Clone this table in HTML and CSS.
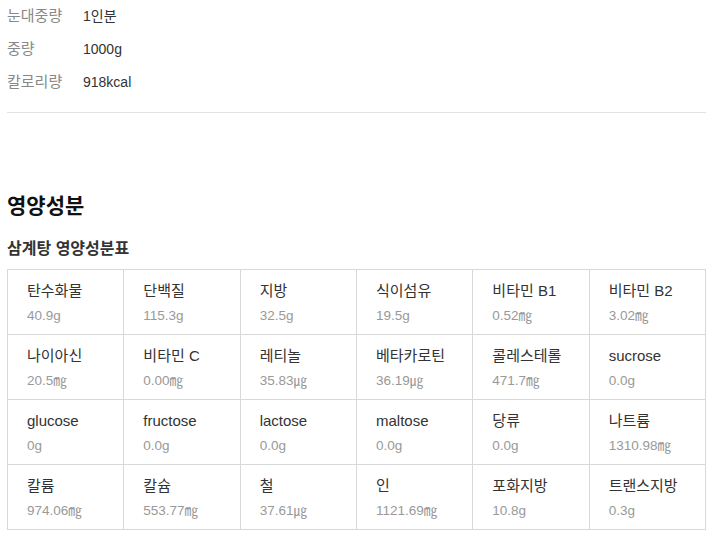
FILE: index.html
```html
<!DOCTYPE html>
<html lang="ko">
<head>
<meta charset="utf-8">
<link rel="stylesheet" href="styles.css">
</head>
<body>
<div class="page">
  <dl class="info">
    <div class="info-row"><dt>눈대중량</dt><dd>1인분</dd></div>
    <div class="info-row"><dt>중량</dt><dd>1000g</dd></div>
    <div class="info-row"><dt>칼로리량</dt><dd>918kcal</dd></div>
  </dl>
  <hr class="divider">
  <h2 class="section-title">영양성분</h2>
  <h3 class="table-title">삼계탕 영양성분표</h3>
  <div class="grid">
    <div class="cell"><div class="name">탄수화물</div><div class="val">40.9g</div></div>
    <div class="cell"><div class="name">단백질</div><div class="val">115.3g</div></div>
    <div class="cell"><div class="name">지방</div><div class="val">32.5g</div></div>
    <div class="cell"><div class="name">식이섬유</div><div class="val">19.5g</div></div>
    <div class="cell"><div class="name">비타민 B1</div><div class="val">0.52㎎</div></div>
    <div class="cell"><div class="name">비타민 B2</div><div class="val">3.02㎎</div></div>
    <div class="cell"><div class="name">나이아신</div><div class="val">20.5㎎</div></div>
    <div class="cell"><div class="name">비타민 C</div><div class="val">0.00㎎</div></div>
    <div class="cell"><div class="name">레티놀</div><div class="val">35.83㎍</div></div>
    <div class="cell"><div class="name">베타카로틴</div><div class="val">36.19㎍</div></div>
    <div class="cell"><div class="name">콜레스테롤</div><div class="val">471.7㎎</div></div>
    <div class="cell"><div class="name">sucrose</div><div class="val">0.0g</div></div>
    <div class="cell"><div class="name">glucose</div><div class="val">0g</div></div>
    <div class="cell"><div class="name">fructose</div><div class="val">0.0g</div></div>
    <div class="cell"><div class="name">lactose</div><div class="val">0.0g</div></div>
    <div class="cell"><div class="name">maltose</div><div class="val">0.0g</div></div>
    <div class="cell"><div class="name">당류</div><div class="val">0.0g</div></div>
    <div class="cell"><div class="name">나트륨</div><div class="val">1310.98㎎</div></div>
    <div class="cell"><div class="name">칼륨</div><div class="val">974.06㎎</div></div>
    <div class="cell"><div class="name">칼슘</div><div class="val">553.77㎎</div></div>
    <div class="cell"><div class="name">철</div><div class="val">37.61㎍</div></div>
    <div class="cell"><div class="name">인</div><div class="val">1121.69㎎</div></div>
    <div class="cell"><div class="name">포화지방</div><div class="val">10.8g</div></div>
    <div class="cell"><div class="name">트랜스지방</div><div class="val">0.3g</div></div>
  </div>
</div>
</body>
</html>
```
FILE: styles.css
```css
* { box-sizing: border-box; }
html, body { margin: 0; padding: 0; background: #fff; }
body {
  font-family: "Liberation Sans", "Noto Sans CJK KR", sans-serif;
  color: #333;
  font-size: 14px;
}
.page { padding: 0 8px 0 7px; }
.info { margin: 0; padding: 0; }
.info-row {
  display: flex;
  height: 33px;
  align-items: center;
}
.info-row:first-child { margin-top: -1px; }
.info dt { width: 76px; color: #888; font-size: 15px; line-height: 20px; }
.info dd { margin: 0; color: #333; font-size: 14px; line-height: 20px; }
.divider {
  border: 0;
  border-top: 1px solid #e2e2e2;
  margin: 14px 0 0;
}
.section-title {
  margin: 76px 0 0;
  font-family: "Noto Sans CJK KR", sans-serif;
  font-size: 21px;
  font-weight: 700;
  line-height: 30px;
  color: #111;
}
.table-title {
  margin: 16px 0 0;
  font-family: "Noto Sans CJK KR", sans-serif;
  font-size: 16px;
  font-weight: 700;
  line-height: 24px;
  color: #333;
}
.grid {
  margin-top: 10px;
  display: grid;
  grid-template-columns: repeat(6, 1fr);
  border-top: 1px solid #d8d8d8;
  border-left: 1px solid #d8d8d8;
}
.cell {
  height: 65px;
  border-right: 1px solid #d8d8d8;
  border-bottom: 1px solid #d8d8d8;
  padding: 11px 0 0 19px;
}
.name { font-size: 15px; line-height: 20px; color: #333; }
.val { font-size: 13.5px; line-height: 20px; margin-top: 5px; color: #999; }
```
